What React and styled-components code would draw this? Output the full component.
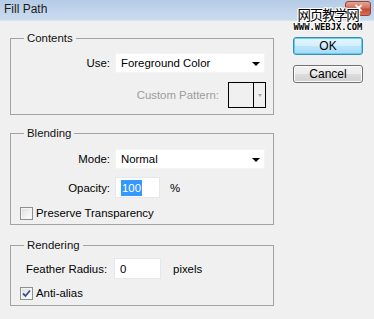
import styled, { createGlobalStyle } from "styled-components";

const GlobalStyle = createGlobalStyle`
    html, body {
        margin: 0;
        padding: 0;
        background: #f0f0f0;
    }
    body {
        font-family: "Liberation Sans", Arial, sans-serif;
        font-size: 11.4px;
        color: #000;
    }
`;

const Window = styled.div`
    position: relative;
    width: 374px;
    height: 319px;
    background: #f0f0f0;
    overflow: hidden;
`;

const TitleBar = styled.div`
    height: 21px;
    display: flex;
    align-items: center;
    justify-content: space-between;
    padding: 0 3px 0 4px;
    box-sizing: border-box;
    background: linear-gradient(#b4cbe6, #c3d6ec 60%, #c9dbee);
    border-bottom: 1px solid #d8e3f0;
`;

const Title = styled.span`
    font-size: 12px;
    color: #1b1b1b;
    margin-top: -2px;
`;

const CloseButton = styled.div`
    width: 26px;
    height: 15px;
    margin-top: -3px;
    border: 1px solid #9a4238;
    border-radius: 3px;
    box-sizing: border-box;
    background: linear-gradient(#e6a393, #d2705f 45%, #c24a38 55%, #d56f58);
    color: #fff;
    font-weight: 700;
    font-size: 11px;
    line-height: 13px;
    text-align: center;
`;

const Watermark = styled.div`
    position: absolute;
    left: 292px;
    top: 6px;
    width: 72px;
    display: flex;
    flex-direction: column;
    align-items: center;
    pointer-events: none;
`;

const WatermarkCn = styled.div`
    font-family: "Noto Sans CJK SC", sans-serif;
    font-size: 13.5px;
    line-height: 17px;
    letter-spacing: -1.3px;
    color: #000;
    text-shadow: 1px 0 #fff, -1px 0 #fff, 0 1px #fff, 0 -1px #fff, 1px 1px #fff, -1px -1px #fff, 1px -1px #fff, -1px 1px #fff;
`;

const WatermarkUrl = styled.div`
    font-family: "DejaVu Sans Mono", monospace;
    font-weight: 700;
    font-size: 8.8px;
    line-height: 9px;
    color: #000;
    text-shadow: 1px 0 #fff, -1px 0 #fff, 0 1px #fff, 0 -1px #fff;
`;

const Body = styled.div`
    display: flex;
    gap: 19px;
    padding: 10px 0 0 10px;
`;

const Groups = styled.div`
    width: 264px;
    display: flex;
    flex-direction: column;
`;

const Group = styled.fieldset`
    margin: ${p => p.$top || 0}px 0 0 0;
    padding: 0 7px ${p => p.$bottom || 0}px 0;
    border: 1px solid #a3a3a3;
    min-width: 0;
`;

const Legend = styled.legend`
    margin-left: 13px;
    padding: 0 3px;
    line-height: 14px;
    color: #111;
`;

const Row = styled.div`
    display: flex;
    align-items: center;
    gap: ${p => p.$gap ?? 5}px;
    margin-top: ${p => p.$top || 0}px;
    padding-left: ${p => p.$indent || 0}px;
    justify-content: ${p => (p.$end ? "flex-end" : "flex-start")};
`;

const Label = styled.span`
    width: ${p => (p.$width ? p.$width + "px" : "auto")};
    text-align: right;
    color: ${p => (p.$disabled ? "#9d9d9d" : "#000")};
    white-space: nowrap;
`;

const Select = styled.div`
    width: 150px;
    height: 20px;
    box-sizing: border-box;
    background: #fff;
    border: 1px solid #f4f4f4;
    display: flex;
    align-items: center;
    justify-content: space-between;
    padding: 0 4px 0 5px;
`;

const Arrow = styled.span`
    width: 0;
    height: 0;
    border-left: 4px solid transparent;
    border-right: 4px solid transparent;
    border-top: 4px solid #000;
    margin-top: 1px;
`;

const Pattern = styled.div`
    width: 38px;
    height: 26px;
    box-sizing: border-box;
    border: 1px solid #000;
    display: flex;
`;

const PatternSwatch = styled.div`
    flex: 1;
    border-right: 1px solid #000;
`;

const PatternArrow = styled.div`
    width: 11px;
    display: flex;
    align-items: center;
    justify-content: center;
    &::after {
        content: "";
        border-left: 2.5px solid transparent;
        border-right: 2.5px solid transparent;
        border-top: 3px solid #a8a8a8;
    }
`;

const TextBox = styled.div`
    width: ${p => p.$width}px;
    height: 21px;
    box-sizing: border-box;
    background: #fff;
    border: 1px solid #e3e8ef;
    display: flex;
    align-items: center;
    padding-left: 5px;
`;

const Selected = styled.span`
    background: #3399ff;
    color: #fff;
    padding: 1px 1px;
    line-height: 14px;
`;

const Unit = styled.span`
    margin-left: 5px;
`;

const CheckRow = styled.label`
    display: flex;
    align-items: center;
    gap: 3px;
    margin-top: ${p => p.$top || 0}px;
    padding-left: 9px;
    height: 14px;
`;

const Box = styled.span`
    width: 13px;
    height: 13px;
    box-sizing: border-box;
    border: 1px solid #8e8f8f;
    background: linear-gradient(135deg, #dcdcdc, #f6f6f6 70%, #fff);
    box-shadow: inset 0 0 0 1px #f4f4f4;
    display: flex;
    align-items: center;
    justify-content: center;
`;

const Buttons = styled.div`
    display: flex;
    flex-direction: column;
    gap: 10px;
    margin-top: 6px;
`;

const Button = styled.div`
    width: 70px;
    height: 18px;
    box-sizing: border-box;
    border-radius: 3px;
    display: flex;
    align-items: center;
    justify-content: center;
    font-size: 12px;
    border: 1px solid ${p => (p.$primary ? "#3c8ab5" : "#707070")};
    background: ${p =>
        p.$primary
            ? "linear-gradient(#e8f6fd, #d4eefb 50%, #bee6fd 51%, #a7d9f5)"
            : "linear-gradient(#f2f2f2, #ebebeb 50%, #dddddd 51%, #cfcfcf)"};
    box-shadow: ${p => (p.$primary ? "inset 0 0 0 1px #5ed0f3" : "inset 0 0 0 1px #fcfcfc")};
`;

const Check = () => (
    <svg width="9" height="9" viewBox="0 0 9 9">
        <path d="M1 4.5 L3.5 7 L8 1.5" fill="none" stroke="#3b4f8c" strokeWidth="1.8" />
    </svg>
);

const App = () => {
    return (
        <Window>
            <GlobalStyle />
            <TitleBar>
                <Title>Fill Path</Title>
                <CloseButton>✕</CloseButton>
            </TitleBar>
            <Body>
                <Groups>
                    <Group $bottom={6}>
                        <Legend>Contents</Legend>
                        <Row $top={8}>
                            <Label $width={99}>Use:</Label>
                            <Select>
                                <span>Foreground Color</span>
                                <Arrow />
                            </Select>
                        </Row>
                        <Row $top={9} $end $gap={9}>
                            <Label $disabled>Custom Pattern:</Label>
                            <Pattern>
                                <PatternSwatch />
                                <PatternArrow />
                            </Pattern>
                        </Row>
                    </Group>
                    <Group $top={11} $bottom={4}>
                        <Legend>Blending</Legend>
                        <Row $top={9}>
                            <Label $width={99}>Mode:</Label>
                            <Select>
                                <span>Normal</span>
                                <Arrow />
                            </Select>
                        </Row>
                        <Row $top={8}>
                            <Label $width={99}>Opacity:</Label>
                            <TextBox $width={45}>
                                <Selected>100</Selected>
                            </TextBox>
                            <Unit>%</Unit>
                        </Row>
                        <CheckRow $top={8}>
                            <Box />
                            Preserve Transparency
                        </CheckRow>
                    </Group>
                    <Group $top={13} $bottom={5}>
                        <Legend>Rendering</Legend>
                        <Row $top={6} $indent={15} $gap={7}>
                            <Label>Feather Radius:</Label>
                            <TextBox $width={47}>0</TextBox>
                            <Unit>pixels</Unit>
                        </Row>
                        <CheckRow $top={7}>
                            <Box>
                                <Check />
                            </Box>
                            Anti-alias
                        </CheckRow>
                    </Group>
                </Groups>
                <Buttons>
                    <Button $primary>OK</Button>
                    <Button>Cancel</Button>
                </Buttons>
            </Body>
            <Watermark>
                <WatermarkCn>网页教学网</WatermarkCn>
                <WatermarkUrl>WWW.WEBJX.COM</WatermarkUrl>
            </Watermark>
        </Window>
    );
};

export default App;
